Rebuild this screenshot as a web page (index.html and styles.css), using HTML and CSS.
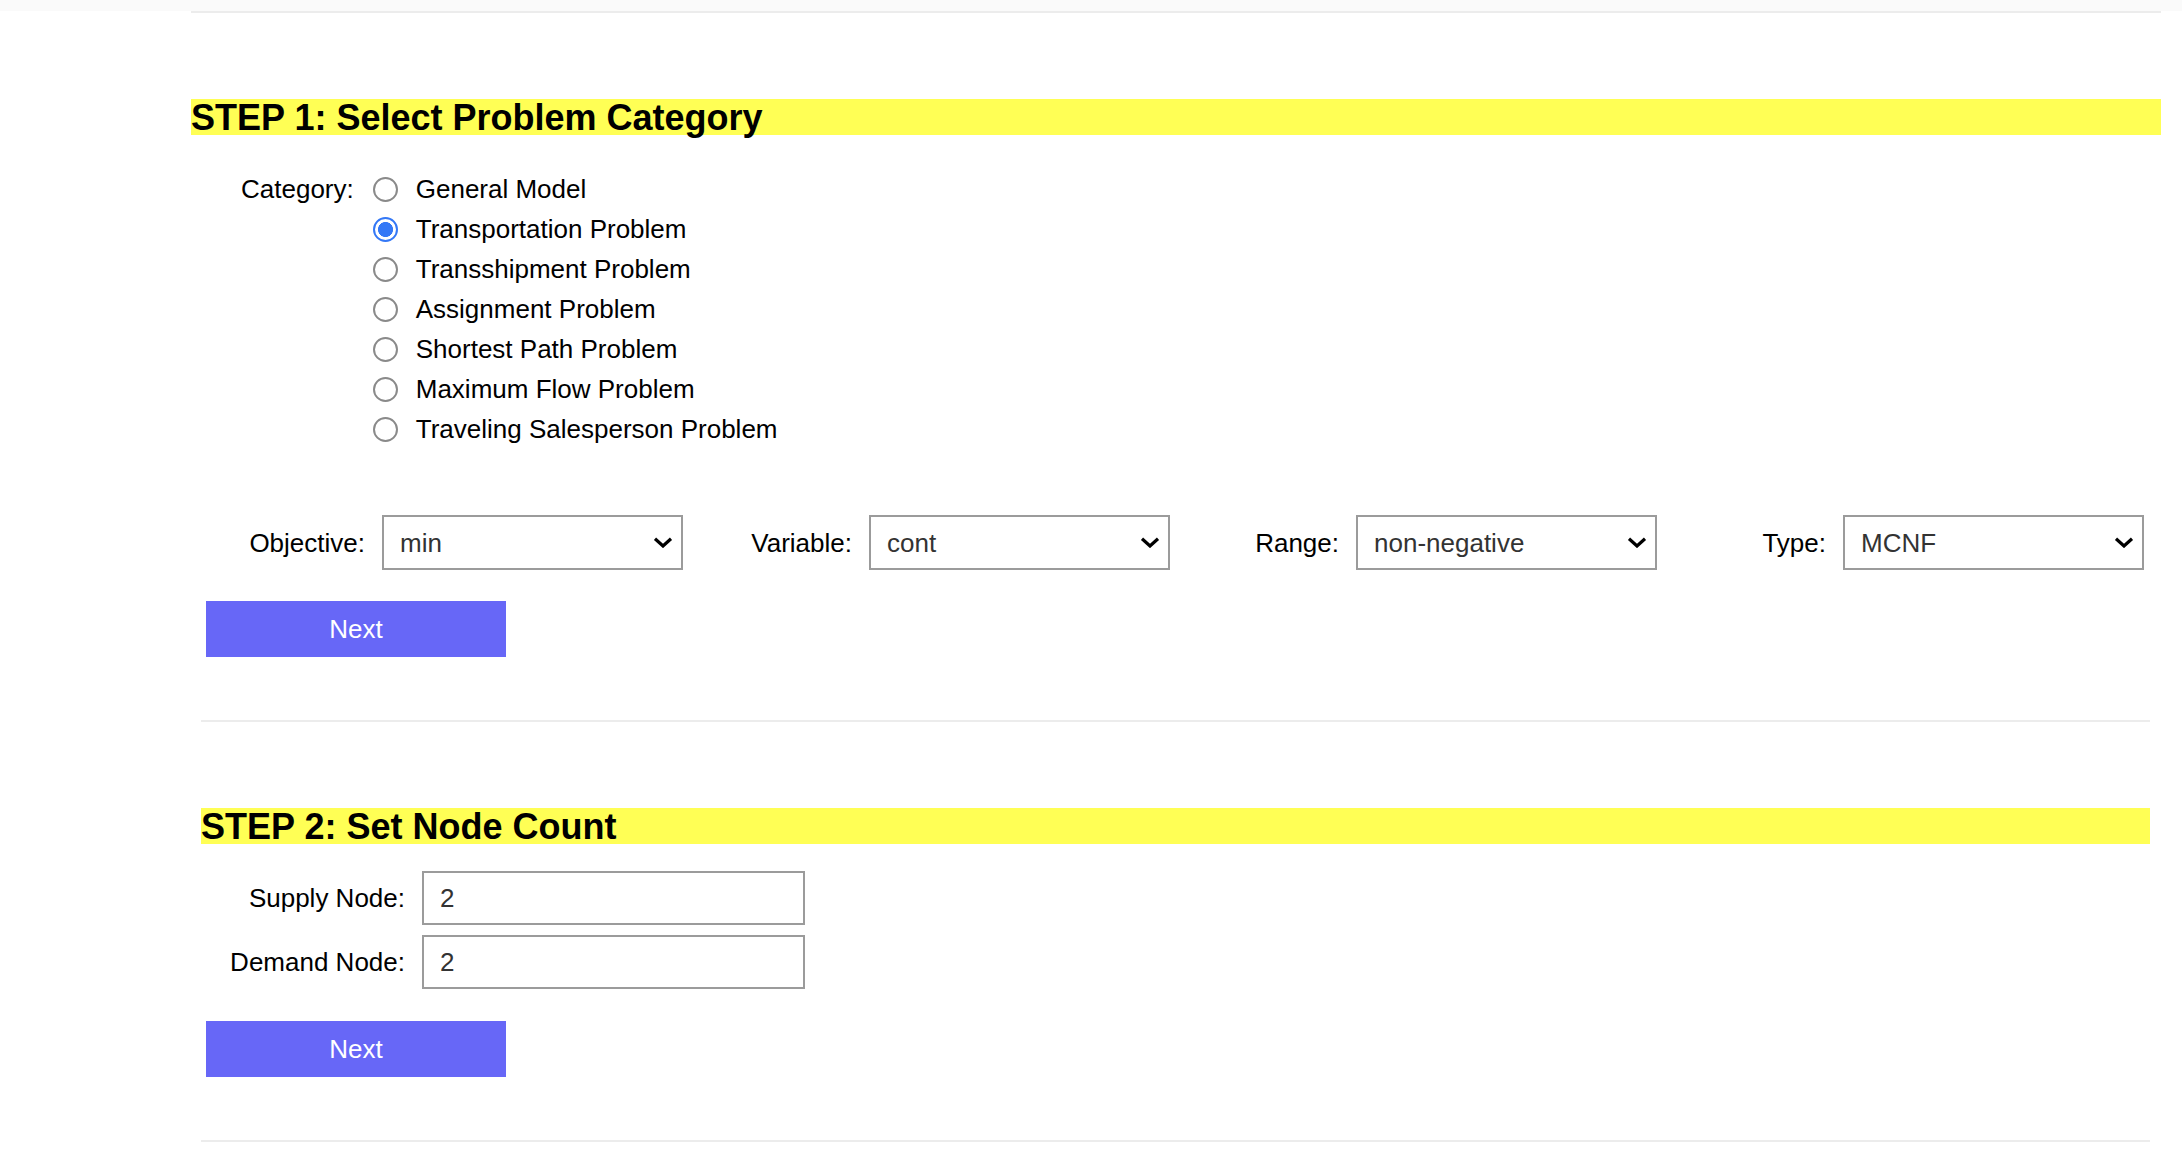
FILE: index.html
```html
<!DOCTYPE html>
<html lang="en">
<head>
<meta charset="utf-8">
<title>Network Optimization</title>
<link rel="stylesheet" href="styles.css">
</head>
<body>
<div class="topbar"></div>
<main class="page">
  <section class="step step-one">
    <hr class="rule">
    <h2 class="step-title">STEP 1: Select Problem Category</h2>
    <div class="category">
      <span class="field-label category-label">Category:</span>
      <div class="options">
        <label class="option"><input type="radio" name="cat" class="radio"><span>General Model</span></label>
        <label class="option"><input type="radio" name="cat" class="radio" checked><span>Transportation Problem</span></label>
        <label class="option"><input type="radio" name="cat" class="radio"><span>Transshipment Problem</span></label>
        <label class="option"><input type="radio" name="cat" class="radio"><span>Assignment Problem</span></label>
        <label class="option"><input type="radio" name="cat" class="radio"><span>Shortest Path Problem</span></label>
        <label class="option"><input type="radio" name="cat" class="radio"><span>Maximum Flow Problem</span></label>
        <label class="option"><input type="radio" name="cat" class="radio"><span>Traveling Salesperson Problem</span></label>
      </div>
    </div>
    <div class="settings">
      <div class="setting">
        <span class="field-label">Objective:</span>
        <div class="select-wrap">
          <select class="select"><option>min</option><option>max</option></select>
          <svg class="chevron" width="20" height="11" viewBox="0 0 20 11"><path d="M2 1.8 L10 9 L18 1.8" fill="none" stroke="#000" stroke-width="3.2"/></svg>
        </div>
      </div>
      <div class="setting">
        <span class="field-label">Variable:</span>
        <div class="select-wrap">
          <select class="select"><option>cont</option><option>int</option></select>
          <svg class="chevron" width="20" height="11" viewBox="0 0 20 11"><path d="M2 1.8 L10 9 L18 1.8" fill="none" stroke="#000" stroke-width="3.2"/></svg>
        </div>
      </div>
      <div class="setting">
        <span class="field-label">Range:</span>
        <div class="select-wrap">
          <select class="select"><option>non-negative</option><option>free</option></select>
          <svg class="chevron" width="20" height="11" viewBox="0 0 20 11"><path d="M2 1.8 L10 9 L18 1.8" fill="none" stroke="#000" stroke-width="3.2"/></svg>
        </div>
      </div>
      <div class="setting">
        <span class="field-label">Type:</span>
        <div class="select-wrap">
          <select class="select"><option>MCNF</option></select>
          <svg class="chevron" width="20" height="11" viewBox="0 0 20 11"><path d="M2 1.8 L10 9 L18 1.8" fill="none" stroke="#000" stroke-width="3.2"/></svg>
        </div>
      </div>
    </div>
    <button class="next-btn next-one" type="button">Next</button>
  </section>

  <section class="step step-two">
    <hr class="rule">
    <h2 class="step-title">STEP 2: Set Node Count</h2>
    <div class="counts">
      <label class="field-label count-label" for="supply">Supply Node:</label>
      <input id="supply" class="text-input" type="text" value="2">
      <label class="field-label count-label" for="demand">Demand Node:</label>
      <input id="demand" class="text-input" type="text" value="2">
    </div>
    <button class="next-btn next-two" type="button">Next</button>
    <hr class="rule rule-end">
  </section>
</main>
</body>
</html>
```

FILE: styles.css
```css
html, body {
  margin: 0;
  padding: 0;
  background: #ffffff;
}

body {
  font-family: "Liberation Sans", Arial, Helvetica, sans-serif;
  color: #000;
  font-size: 26px;
}

.topbar {
  height: 11px;
  background: #fafafa;
}

.page {
  display: flex;
  flex-direction: column;
}

.rule {
  margin: 0;
  border: 0;
  height: 2px;
  background: #ececec;
}

.step-one {
  margin-left: 191px;
  width: 1970px;
  display: flex;
  flex-direction: column;
}

.step-two {
  margin-left: 201px;
  width: 1949px;
  display: flex;
  flex-direction: column;
  margin-top: 63px;
}

.step-title {
  margin: 86px 0 0 0;
  height: 36px;
  line-height: 38px;
  font-size: 36px;
  font-weight: bold;
  background: #ffff55;
  white-space: nowrap;
}

.field-label {
  font-size: 26px;
  line-height: 40px;
  white-space: nowrap;
}

.category {
  display: flex;
  margin-top: 34px;
  padding-left: 50px;
  gap: 19px;
}

.options {
  display: flex;
  flex-direction: column;
}

.option {
  display: flex;
  align-items: center;
  height: 40px;
  gap: 18px;
  font-size: 26px;
}

.radio {
  appearance: none;
  -webkit-appearance: none;
  margin: 0;
  width: 25px;
  height: 25px;
  border: 2px solid #8a8a8a;
  border-radius: 50%;
  background: #fff;
  box-sizing: border-box;
  flex: none;
}

.radio:checked {
  border: 2px solid #3478f6;
  background: radial-gradient(circle, #3478f6 0 7.2px, #fff 7.8px);
}

.settings {
  display: grid;
  grid-template-columns: repeat(4, 487px);
  margin-top: 66px;
  margin-left: 5px;
}

.setting {
  display: flex;
  justify-content: flex-end;
  align-items: center;
  gap: 17px;
}

.select-wrap {
  position: relative;
  width: 301px;
  height: 55px;
}

.select {
  appearance: none;
  -webkit-appearance: none;
  width: 100%;
  height: 100%;
  margin: 0;
  border: 2px solid #9b9b9b;
  border-radius: 0;
  background: #fff;
  padding: 0 40px 0 16px;
  font-family: "Liberation Sans", Arial, sans-serif;
  font-size: 26px;
  color: #333;
  box-sizing: border-box;
}

.chevron {
  position: absolute;
  right: 10px;
  top: 22px;
  pointer-events: none;
}

.next-btn {
  width: 300px;
  height: 56px;
  margin: 0;
  border: 0;
  border-radius: 0;
  background: #6767f7;
  color: #fff;
  font-family: "Liberation Sans", Arial, sans-serif;
  font-size: 26px;
  padding: 0;
  align-self: flex-start;
}

.next-one {
  margin-top: 31px;
  margin-left: 15px;
}

.counts {
  display: grid;
  grid-template-columns: 204px 383px;
  column-gap: 17px;
  row-gap: 10px;
  margin-top: 27px;
  align-items: center;
}

.count-label {
  text-align: right;
}

.text-input {
  width: 383px;
  height: 54px;
  margin: 0;
  border: 2px solid #9b9b9b;
  border-radius: 0;
  padding: 0 16px;
  box-sizing: border-box;
  font-family: "Liberation Sans", Arial, sans-serif;
  font-size: 26px;
  color: #333;
  background: #fff;
}

.next-two {
  margin-top: 32px;
  margin-left: 5px;
}

.rule-end {
  margin-top: 63px;
}
```
